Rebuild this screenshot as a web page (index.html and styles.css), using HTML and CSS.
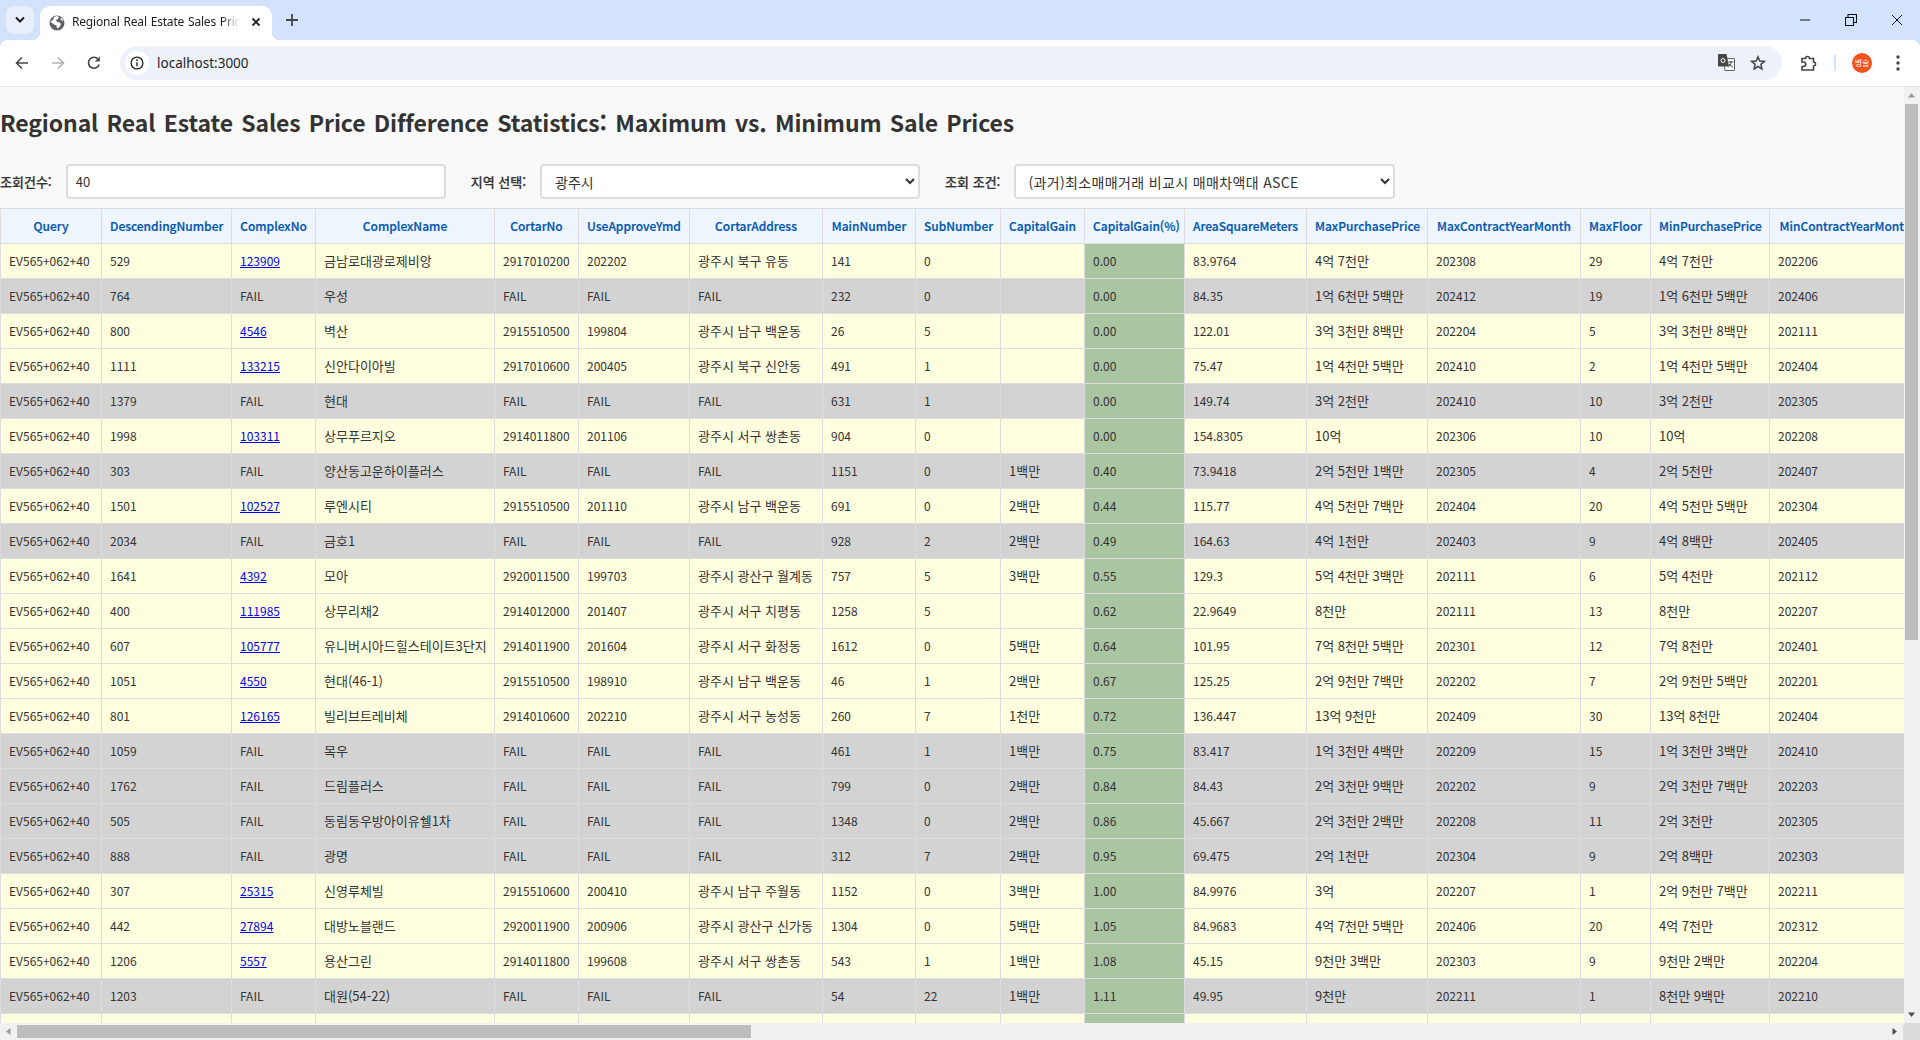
FILE: index.html
```html
<!DOCTYPE html>
<html lang="ko">
<head>
<meta charset="utf-8">
<title>Regional Real Estate Sales Price Difference Statistics</title>
<link rel="stylesheet" href="styles.css">
</head>
<body>
<div class="tabstrip">
  <button class="tab-search"><svg width="12" height="8" viewBox="0 0 12 8"><path d="M2 1.5 6 5.5 10 1.5" fill="none" stroke="#1f1f1f" stroke-width="2"/></svg></button>
  <div class="tab">
    <svg class="globe" width="16" height="16" viewBox="0 0 16 16"><circle cx="8" cy="8" r="7.5" fill="#5f6368"/><path d="M1.5 6.5 4 5l1-3 3-1 2 1-1 2-2 1 1 2 3 .5 1 2-2 3-2 1-.5-3L5 9.5z" fill="#fff"/><path d="M12 2.5l2.5 3-1.5.5-1.5-2z" fill="#fff"/></svg>
    <span class="tab-title">Regional Real Estate Sales Price Difference Statistics</span>
    <svg class="tab-close" width="10" height="10" viewBox="0 0 10 10"><path d="M1.5 1.5l7 7M8.5 1.5l-7 7" stroke="#1f1f1f" stroke-width="1.8"/></svg>
  </div>
  <svg class="new-tab" width="12" height="12" viewBox="0 0 12 12"><path d="M6 0v12M0 6h12" stroke="#444746" stroke-width="1.8"/></svg>
  <div class="win-controls">
    <span class="win-btn"><svg width="12" height="2" viewBox="0 0 12 2"><path d="M1 1h10" stroke="#111" stroke-width="1"/></svg></span>
    <span class="win-btn"><svg width="12" height="12" viewBox="0 0 12 12"><path d="M.5 3.5h8v8h-8zM3 3.5V.5h8.500v8H8.500" fill="none" stroke="#111" stroke-width="1.100"/></svg></span>
    <span class="win-btn"><svg width="12" height="12" viewBox="0 0 12 12"><path d="M1 1l10 10M11 1 1 11" stroke="#111" stroke-width="1"/></svg></span>
  </div>
</div>
<div class="toolbar">
  <span class="nav-btn"><svg width="14" height="14" viewBox="0 0 14 14"><path d="M13 7H2M7 1.500 1.500 7 7 12.500" fill="none" stroke="#444746" stroke-width="1.600"/></svg></span>
  <span class="nav-btn"><svg width="14" height="14" viewBox="0 0 14 14"><path d="M1 7h11M7 1.500 12.500 7 7 12.500" fill="none" stroke="#b2b4b6" stroke-width="1.600"/></svg></span>
  <span class="nav-btn"><svg width="14" height="14" viewBox="0 0 14 14"><path d="M12.200 8.500A5.500 5.500 0 1 1 11.200 3.200" fill="none" stroke="#444746" stroke-width="1.600"/><path d="M12.800 .6v5h-5z" fill="#444746"/></svg></span>
  <div class="omnibox">
    <span class="site-info"><svg width="14" height="14" viewBox="0 0 14 14"><circle cx="7" cy="7" r="5.900" fill="none" stroke="#1f1f1f" stroke-width="1.300"/><path d="M7 6.200v4" stroke="#1f1f1f" stroke-width="1.400"/><circle cx="7" cy="4.200" r=".9" fill="#1f1f1f"/></svg></span>
    <span class="url">localhost:3000</span>
    <svg class="translate" width="17" height="17" viewBox="0 0 17 17"><path d="M5 4.500h11a.5.5 0 0 1 .5.500v11a.5.500 0 0 1-.5.500H7z" fill="#fff" stroke="#5f6368" stroke-width="1"/><path d="M1 0h7.500l2.500 12.500H1a1 1 0 0 1-1-1V1a1 1 0 0 1 1-1z" fill="#444746"/><circle cx="5" cy="6.500" r="2" fill="none" stroke="#fff" stroke-width="1"/><path d="M10.500 8h5M13 7v1.500c0 2-1.500 3.500-3 4.500M11 10l4 3.500" fill="none" stroke="#444746" stroke-width="1"/></svg>
    <svg class="star" width="16" height="16" viewBox="0 0 16 16"><path d="M8 1.800 9.800 6l4.600.4-3.500 3 1 4.500L8 11.500l-3.900 2.400 1-4.500-3.500-3L6.200 6z" fill="none" stroke="#444746" stroke-width="1.500"/></svg>
  </div>
  <svg class="puzzle" width="16" height="16" viewBox="0 0 16 16"><path d="M1 3.500h3.500a2 2 0 0 1 4 0H12.500V7a2 2 0 0 1 0 4v4H1v-3.500h1.500a2 2 0 0 0 0-4.500H1z" fill="none" stroke="#444746" stroke-width="1.600"/></svg>
  <span class="divider"></span>
  <span class="avatar">병술</span>
  <svg class="menu" width="4" height="16" viewBox="0 0 4 16"><circle cx="2" cy="2" r="1.700" fill="#444746"/><circle cx="2" cy="8" r="1.700" fill="#444746"/><circle cx="2" cy="14" r="1.700" fill="#444746"/></svg>
</div>
<div class="viewport">
  <main class="content">
    <h1 class="title">Regional Real Estate Sales Price Difference Statistics: Maximum vs. Minimum Sale Prices</h1>
    <div class="filters">
      <label class="filter-label">조회건수:</label>
      <input class="field field-count" type="text" value="40">
      <label class="filter-label">지역 선택:</label>
      <select class="field field-region"><option>광주시</option></select>
      <label class="filter-label">조회 조건:</label>
      <select class="field field-cond"><option>(과거)최소매매거래 비교시 매매차액대 ASCE</option></select>
    </div>
    <table class="grid">
      <colgroup>
        <col class="c1"><col class="c2"><col class="c3"><col class="c4"><col class="c5"><col class="c6"><col class="c7"><col class="c8"><col class="c9"><col class="c10"><col class="c11"><col class="c12"><col class="c13"><col class="c14"><col class="c15"><col class="c16"><col class="c17">
      </colgroup>
      <thead><tr><th>Query</th><th>DescendingNumber</th><th>ComplexNo</th><th>ComplexName</th><th>CortarNo</th><th>UseApproveYmd</th><th>CortarAddress</th><th>MainNumber</th><th>SubNumber</th><th>CapitalGain</th><th>CapitalGain(%)</th><th>AreaSquareMeters</th><th>MaxPurchasePrice</th><th>MaxContractYearMonth</th><th>MaxFloor</th><th>MinPurchasePrice</th><th>MinContractYearMonth</th></tr></thead>
      <tbody>
        <tr class="ok"><td>EV565+062+40</td><td>529</td><td><a href="#">123909</a></td><td class="ko">금남로대광로제비앙</td><td>2917010200</td><td>202202</td><td class="ko">광주시 북구 유동</td><td>141</td><td>0</td><td class="ko"></td><td class="gain">0.00</td><td>83.9764</td><td class="ko">4억 7천만</td><td>202308</td><td>29</td><td class="ko">4억 7천만</td><td>202206</td></tr>
        <tr class="fail"><td>EV565+062+40</td><td>764</td><td>FAIL</td><td class="ko">우성</td><td>FAIL</td><td>FAIL</td><td>FAIL</td><td>232</td><td>0</td><td class="ko"></td><td class="gain">0.00</td><td>84.35</td><td class="ko">1억 6천만 5백만</td><td>202412</td><td>19</td><td class="ko">1억 6천만 5백만</td><td>202406</td></tr>
        <tr class="ok"><td>EV565+062+40</td><td>800</td><td><a href="#">4546</a></td><td class="ko">벽산</td><td>2915510500</td><td>199804</td><td class="ko">광주시 남구 백운동</td><td>26</td><td>5</td><td class="ko"></td><td class="gain">0.00</td><td>122.01</td><td class="ko">3억 3천만 8백만</td><td>202204</td><td>5</td><td class="ko">3억 3천만 8백만</td><td>202111</td></tr>
        <tr class="ok"><td>EV565+062+40</td><td>1111</td><td><a href="#">133215</a></td><td class="ko">신안다이아빌</td><td>2917010600</td><td>200405</td><td class="ko">광주시 북구 신안동</td><td>491</td><td>1</td><td class="ko"></td><td class="gain">0.00</td><td>75.47</td><td class="ko">1억 4천만 5백만</td><td>202410</td><td>2</td><td class="ko">1억 4천만 5백만</td><td>202404</td></tr>
        <tr class="fail"><td>EV565+062+40</td><td>1379</td><td>FAIL</td><td class="ko">현대</td><td>FAIL</td><td>FAIL</td><td>FAIL</td><td>631</td><td>1</td><td class="ko"></td><td class="gain">0.00</td><td>149.74</td><td class="ko">3억 2천만</td><td>202410</td><td>10</td><td class="ko">3억 2천만</td><td>202305</td></tr>
        <tr class="ok"><td>EV565+062+40</td><td>1998</td><td><a href="#">103311</a></td><td class="ko">상무푸르지오</td><td>2914011800</td><td>201106</td><td class="ko">광주시 서구 쌍촌동</td><td>904</td><td>0</td><td class="ko"></td><td class="gain">0.00</td><td>154.8305</td><td class="ko">10억</td><td>202306</td><td>10</td><td class="ko">10억</td><td>202208</td></tr>
        <tr class="fail"><td>EV565+062+40</td><td>303</td><td>FAIL</td><td class="ko">양산동고운하이플러스</td><td>FAIL</td><td>FAIL</td><td>FAIL</td><td>1151</td><td>0</td><td class="ko">1백만</td><td class="gain">0.40</td><td>73.9418</td><td class="ko">2억 5천만 1백만</td><td>202305</td><td>4</td><td class="ko">2억 5천만</td><td>202407</td></tr>
        <tr class="ok"><td>EV565+062+40</td><td>1501</td><td><a href="#">102527</a></td><td class="ko">루엔시티</td><td>2915510500</td><td>201110</td><td class="ko">광주시 남구 백운동</td><td>691</td><td>0</td><td class="ko">2백만</td><td class="gain">0.44</td><td>115.77</td><td class="ko">4억 5천만 7백만</td><td>202404</td><td>20</td><td class="ko">4억 5천만 5백만</td><td>202304</td></tr>
        <tr class="fail"><td>EV565+062+40</td><td>2034</td><td>FAIL</td><td class="ko">금호1</td><td>FAIL</td><td>FAIL</td><td>FAIL</td><td>928</td><td>2</td><td class="ko">2백만</td><td class="gain">0.49</td><td>164.63</td><td class="ko">4억 1천만</td><td>202403</td><td>9</td><td class="ko">4억 8백만</td><td>202405</td></tr>
        <tr class="ok"><td>EV565+062+40</td><td>1641</td><td><a href="#">4392</a></td><td class="ko">모아</td><td>2920011500</td><td>199703</td><td class="ko">광주시 광산구 월계동</td><td>757</td><td>5</td><td class="ko">3백만</td><td class="gain">0.55</td><td>129.3</td><td class="ko">5억 4천만 3백만</td><td>202111</td><td>6</td><td class="ko">5억 4천만</td><td>202112</td></tr>
        <tr class="ok"><td>EV565+062+40</td><td>400</td><td><a href="#">111985</a></td><td class="ko">상무리채2</td><td>2914012000</td><td>201407</td><td class="ko">광주시 서구 치평동</td><td>1258</td><td>5</td><td class="ko"></td><td class="gain">0.62</td><td>22.9649</td><td class="ko">8천만</td><td>202111</td><td>13</td><td class="ko">8천만</td><td>202207</td></tr>
        <tr class="ok"><td>EV565+062+40</td><td>607</td><td><a href="#">105777</a></td><td class="ko">유니버시아드힐스테이트3단지</td><td>2914011900</td><td>201604</td><td class="ko">광주시 서구 화정동</td><td>1612</td><td>0</td><td class="ko">5백만</td><td class="gain">0.64</td><td>101.95</td><td class="ko">7억 8천만 5백만</td><td>202301</td><td>12</td><td class="ko">7억 8천만</td><td>202401</td></tr>
        <tr class="ok"><td>EV565+062+40</td><td>1051</td><td><a href="#">4550</a></td><td class="ko">현대(46-1)</td><td>2915510500</td><td>198910</td><td class="ko">광주시 남구 백운동</td><td>46</td><td>1</td><td class="ko">2백만</td><td class="gain">0.67</td><td>125.25</td><td class="ko">2억 9천만 7백만</td><td>202202</td><td>7</td><td class="ko">2억 9천만 5백만</td><td>202201</td></tr>
        <tr class="ok"><td>EV565+062+40</td><td>801</td><td><a href="#">126165</a></td><td class="ko">빌리브트레비체</td><td>2914010600</td><td>202210</td><td class="ko">광주시 서구 농성동</td><td>260</td><td>7</td><td class="ko">1천만</td><td class="gain">0.72</td><td>136.447</td><td class="ko">13억 9천만</td><td>202409</td><td>30</td><td class="ko">13억 8천만</td><td>202404</td></tr>
        <tr class="fail"><td>EV565+062+40</td><td>1059</td><td>FAIL</td><td class="ko">목우</td><td>FAIL</td><td>FAIL</td><td>FAIL</td><td>461</td><td>1</td><td class="ko">1백만</td><td class="gain">0.75</td><td>83.417</td><td class="ko">1억 3천만 4백만</td><td>202209</td><td>15</td><td class="ko">1억 3천만 3백만</td><td>202410</td></tr>
        <tr class="fail"><td>EV565+062+40</td><td>1762</td><td>FAIL</td><td class="ko">드림플러스</td><td>FAIL</td><td>FAIL</td><td>FAIL</td><td>799</td><td>0</td><td class="ko">2백만</td><td class="gain">0.84</td><td>84.43</td><td class="ko">2억 3천만 9백만</td><td>202202</td><td>9</td><td class="ko">2억 3천만 7백만</td><td>202203</td></tr>
        <tr class="fail"><td>EV565+062+40</td><td>505</td><td>FAIL</td><td class="ko">동림동우방아이유쉘1차</td><td>FAIL</td><td>FAIL</td><td>FAIL</td><td>1348</td><td>0</td><td class="ko">2백만</td><td class="gain">0.86</td><td>45.667</td><td class="ko">2억 3천만 2백만</td><td>202208</td><td>11</td><td class="ko">2억 3천만</td><td>202305</td></tr>
        <tr class="fail"><td>EV565+062+40</td><td>888</td><td>FAIL</td><td class="ko">광명</td><td>FAIL</td><td>FAIL</td><td>FAIL</td><td>312</td><td>7</td><td class="ko">2백만</td><td class="gain">0.95</td><td>69.475</td><td class="ko">2억 1천만</td><td>202304</td><td>9</td><td class="ko">2억 8백만</td><td>202303</td></tr>
        <tr class="ok"><td>EV565+062+40</td><td>307</td><td><a href="#">25315</a></td><td class="ko">신영루체빌</td><td>2915510600</td><td>200410</td><td class="ko">광주시 남구 주월동</td><td>1152</td><td>0</td><td class="ko">3백만</td><td class="gain">1.00</td><td>84.9976</td><td class="ko">3억</td><td>202207</td><td>1</td><td class="ko">2억 9천만 7백만</td><td>202211</td></tr>
        <tr class="ok"><td>EV565+062+40</td><td>442</td><td><a href="#">27894</a></td><td class="ko">대방노블랜드</td><td>2920011900</td><td>200906</td><td class="ko">광주시 광산구 신가동</td><td>1304</td><td>0</td><td class="ko">5백만</td><td class="gain">1.05</td><td>84.9683</td><td class="ko">4억 7천만 5백만</td><td>202406</td><td>20</td><td class="ko">4억 7천만</td><td>202312</td></tr>
        <tr class="ok"><td>EV565+062+40</td><td>1206</td><td><a href="#">5557</a></td><td class="ko">용산그린</td><td>2914011800</td><td>199608</td><td class="ko">광주시 서구 쌍촌동</td><td>543</td><td>1</td><td class="ko">1백만</td><td class="gain">1.08</td><td>45.15</td><td class="ko">9천만 3백만</td><td>202303</td><td>9</td><td class="ko">9천만 2백만</td><td>202204</td></tr>
        <tr class="fail"><td>EV565+062+40</td><td>1203</td><td>FAIL</td><td class="ko">대원(54-22)</td><td>FAIL</td><td>FAIL</td><td>FAIL</td><td>54</td><td>22</td><td class="ko">1백만</td><td class="gain">1.11</td><td>49.95</td><td class="ko">9천만</td><td>202211</td><td>1</td><td class="ko">8천만 9백만</td><td>202210</td></tr>
        <tr class="ok"><td>&nbsp;</td><td></td><td></td><td></td><td></td><td></td><td></td><td></td><td></td><td></td><td class="gain"></td><td></td><td></td><td></td><td></td><td></td><td></td></tr>
      </tbody>
    </table>
  </main>
  <aside class="vbar">
    <svg class="arrow" width="15" height="17" viewBox="0 0 15 17"><path d="M7.500 6 11 10.500H4z" fill="#9a9a9a"/></svg>
    <span class="vthumb"></span>
    <svg class="arrow arrow-end" width="15" height="17" viewBox="0 0 15 17"><path d="M7.500 11 11 6.500H4z" fill="#505050"/></svg>
  </aside>
</div>
<div class="hbar">
  <svg class="arrow" width="17" height="17" viewBox="0 0 17 17"><path d="M6 8.500 10.500 5v7z" fill="#9a9a9a"/></svg>
  <span class="hthumb"></span>
  <svg class="arrow arrow-end" width="17" height="17" viewBox="0 0 17 17"><path d="M11 8.500 6.500 5v7z" fill="#505050"/></svg>
  <span class="corner"></span>
</div>
</body>
</html>
```

FILE: styles.css
```css
* { box-sizing: border-box; }
html, body { margin: 0; height: 100%; overflow: hidden; }
body {
  display: flex;
  flex-direction: column;
  width: 1920px;
  height: 1040px;
  background: #d3e3fd;
  font-family: "Noto Sans CJK KR", "Noto Sans", sans-serif;
  color: #333;
}

/* browser tab strip */
.tabstrip { display: flex; height: 40px; flex: none; }
.tab-search {
  width: 28px; height: 28px; margin: 6px 0 0 6px; padding: 0; border: 0;
  border-radius: 8px; background: #e8effb;
  display: flex; align-items: center; justify-content: center;
}
.tab {
  position: relative; display: flex; align-items: center;
  width: 232px; height: 34px; margin: 6px 0 0 6px; padding: 0 0 0 9px;
  background: #fff; border-radius: 10px 10px 0 0;
}
.tab::before, .tab::after {
  content: ""; position: absolute; bottom: 0; width: 8px; height: 8px;
}
.tab::before { left: -8px; background: radial-gradient(circle at 0 0, transparent 8px, #fff 8.5px); }
.tab::after { right: -8px; background: radial-gradient(circle at 100% 0, transparent 8px, #fff 8.5px); }
.globe { flex: none; }
.tab-title {
  width: 168px; margin: -2px 0 0 7px; overflow: hidden; white-space: nowrap;
  font: 12px/16px "Noto Sans", sans-serif; letter-spacing: -.2px; color: #1f1f1f;
  word-spacing: 1px;
  mask-image: linear-gradient(to right, #000 150px, transparent 168px);
}
.tab-close { flex: none; margin-left: 11px; margin-top: -2px; }
.new-tab { flex: none; margin: 14px 0 0 14px; }
.win-controls { display: flex; margin-left: auto; }
.win-btn { width: 46px; height: 40px; display: flex; align-items: center; justify-content: center; }

/* browser toolbar */
.toolbar {
  display: flex; align-items: center; flex: none; height: 47px;
  padding: 0 0 1px 5px; background: #fff;
  border-bottom: 1px solid #e2e3e4; border-radius: 8px 8px 0 0;
}
.nav-btn { width: 34px; height: 34px; margin-right: 2px; display: flex; align-items: center; justify-content: center; }
.omnibox {
  display: flex; align-items: center; width: 1662px; height: 34px; margin-left: 7px;
  padding-left: 5px; background: #edf2fa; border-radius: 17px;
}
.site-info { width: 24px; height: 24px; border-radius: 50%; background: #fff; display: flex; align-items: center; justify-content: center; }
.url { margin-left: 8px; font: 13.500px/18px "Noto Sans", sans-serif; color: #1f1f1f; }
.translate { margin-left: auto; }
.star { margin: 0 16px 0 15px; }
.puzzle { margin-left: 19px; flex: none; }
.divider { width: 2px; height: 16px; margin-left: 17px; background: #d3e3fd; flex: none; }
.avatar {
  width: 20px; height: 20px; margin-left: 16px; border-radius: 50%; background: #f4511e; color: #fff;
  font-size: 8px; line-height: 20px; text-align: center; flex: none; white-space: nowrap; overflow: hidden;
}
.menu { margin-left: 24px; flex: none; }

/* page area */
.viewport { display: flex; flex: none; height: 936px; background: #f9f9f9; }
.content { flex: none; width: 1904px; overflow: hidden; }
.title {
  margin: 19px 0 26px; font-size: 23px; line-height: 32px; font-weight: 700;
  color: #333; white-space: nowrap; word-spacing: 2px; letter-spacing: -.12px;
}
.filters { display: flex; align-items: center; height: 35px; margin-bottom: 9px; }
.filter-label { flex: none; font-size: 13px; font-weight: 500; -webkit-text-stroke: .2px #333; margin-right: 14px; white-space: nowrap; }
.field {
  height: 35px; padding: 0 8px; border: 2px solid #ddd; border-radius: 4px; background: #fff;
  font-family: inherit; font-size: 13px; color: #333; margin-right: 25px; flex: none;
}
.field-count { width: 380px; }
.field-region { width: 380px; padding-left: 9px; font-size: 14px; }
.field-cond { width: 381px; margin-right: 0; padding-left: 8px; font-size: 14px; letter-spacing: .35px; }

/* data table */
.grid { table-layout: fixed; width: 1921px; border-collapse: collapse; font-size: 12px; line-height: 18px; }
.grid th, .grid td { border: 1px solid #ddd; padding: 8px; height: 35px; white-space: nowrap; overflow: hidden; }
.grid th { background: #eef5fc; color: #0056b3; font-weight: 500; text-align: center; -webkit-text-stroke: .2px #0056b3; }
.grid td { text-align: left; }
.grid .ko { font-size: 13px; }
.grid a { color: #00e; }
.ok td { background: #ffffe0; }
.fail td { background: #d3d3d3; }
.grid td.gain { background: #a9c5a1; }
.c1 { width: 101px; } .c2 { width: 130px; } .c3 { width: 84px; } .c4 { width: 179px; }
.c5 { width: 84px; } .c6 { width: 111px; } .c7 { width: 133px; } .c8 { width: 93px; }
.c9 { width: 85px; } .c10 { width: 84px; } .c11 { width: 100px; } .c12 { width: 122px; }
.c13 { width: 121px; } .c14 { width: 153px; } .c15 { width: 70px; } .c16 { width: 119px; } .c17 { width: 152px; }

/* scrollbars */
.vbar { display: flex; flex-direction: column; width: 16px; background: #f1f1f1; flex: none; }
.vthumb { width: 13px; height: 536px; margin-left: 1px; background: #bdbdbd; }
.hbar { display: flex; align-items: center; flex: none; height: 17px; background: #f1f1f1; }
.hthumb { width: 734px; height: 13px; background: #bdbdbd; }
.arrow { flex: none; display: block; }
.arrow-end { margin: auto 0 0; }
.hbar .arrow-end { margin: 0 0 0 auto; }
.corner { width: 17px; height: 17px; background: #dcdcdc; flex: none; }
```
